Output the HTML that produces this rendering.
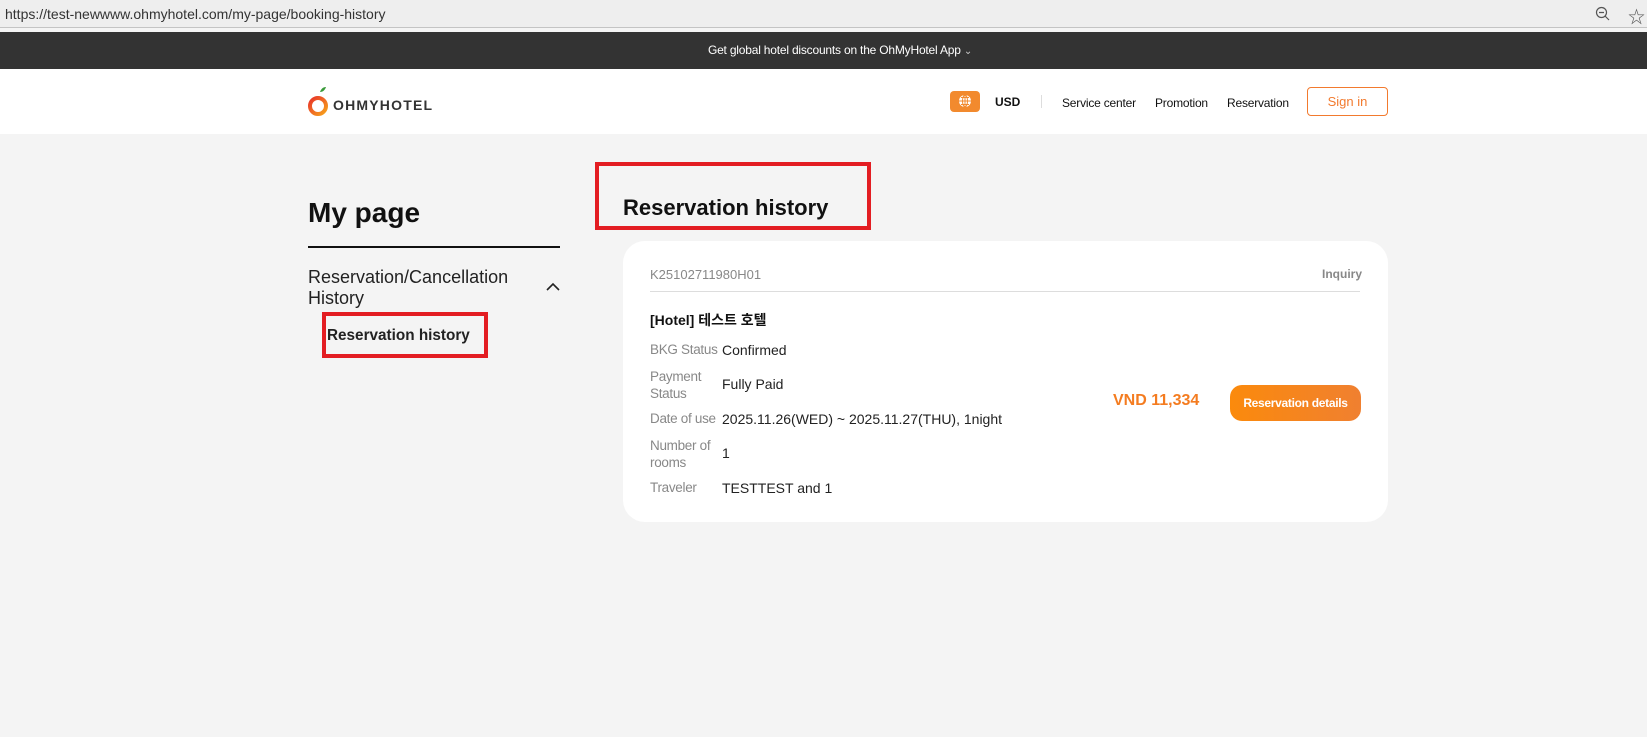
<!DOCTYPE html>
<html><head><meta charset="utf-8"><style>
*{margin:0;padding:0;box-sizing:border-box}
body{width:1647px;height:737px;overflow:hidden;background:#f4f4f4;font-family:"Liberation Sans","Noto Sans CJK KR",sans-serif;position:relative;color:#111}
.a{position:absolute;white-space:nowrap}
</style></head><body>
<div class="a" style="left:0;top:0;width:1647px;height:28px;background:#eeeeee;border-bottom:1px solid #c4c4c4"></div>
<div class="a" style="left:5px;top:6px;font-size:14px;color:#333">https://test-newwww.ohmyhotel.com/my-page/booking-history</div>
<svg class="a" style="left:1595px;top:6px" width="16" height="16" viewBox="0 0 16 16"><circle cx="6.5" cy="6.5" r="5" fill="none" stroke="#555" stroke-width="1.2"/><path d="M4 6.5h5M10 10l4 4" stroke="#555" stroke-width="1.2"/></svg>
<div class="a" style="left:1628px;top:3px;font-size:17px;color:#555">☆</div>
<div class="a" style="left:0;top:32px;width:1647px;height:37px;background:#333"></div>
<div class="a" style="left:0;top:43px;width:1680px;text-align:center;font-size:12px;color:#fff;letter-spacing:-0.2px">Get global hotel discounts on the OhMyHotel App <span style="font-size:10px;color:#ccc">&#8964;</span></div>
<div class="a" style="left:0;top:69px;width:1647px;height:65px;background:#fff"></div>
<svg class="a" style="left:306px;top:85px" width="24" height="34" viewBox="0 0 24 34"><defs><linearGradient id="g" x1="0" y1="0" x2="1" y2="1"><stop offset="0" stop-color="#e8342a"/><stop offset="1" stop-color="#f7a21b"/></linearGradient></defs><path d="M14 7c1-3 3-5 6-5-1 3-3 5-6 5z" fill="#3a9a3a"/><circle cx="12" cy="21" r="8" fill="none" stroke="url(#g)" stroke-width="4"/></svg>
<div class="a" style="left:333px;top:97px;font-size:14px;font-weight:bold;color:#333;letter-spacing:1.2px">OHMYHOTEL</div>
<div class="a" style="left:950px;top:91px;width:30px;height:21px;background:#f28a2e;border-radius:4px"></div>
<svg class="a" style="left:958px;top:94px" width="14" height="14" viewBox="0 0 14 14"><circle cx="7" cy="7" r="6" fill="#fff"/><path d="M1 7h12M7 1v12M3 3.5h8M3 10.5h8" stroke="#f28a2e" stroke-width="1"/><ellipse cx="7" cy="7" rx="2.5" ry="6" fill="none" stroke="#f28a2e" stroke-width="1"/></svg>
<div class="a" style="left:995px;top:95px;font-size:12px;font-weight:bold">USD</div>
<div class="a" style="left:1041px;top:95px;width:1px;height:13px;background:#ddd"></div>
<div class="a" style="left:1062px;top:96px;font-size:12px;letter-spacing:-0.2px">Service center</div>
<div class="a" style="left:1155px;top:96px;font-size:12px;letter-spacing:-0.2px">Promotion</div>
<div class="a" style="left:1227px;top:96px;font-size:12px;letter-spacing:-0.2px">Reservation</div>
<div class="a" style="left:1307px;top:87px;width:81px;height:29px;border:1px solid #f27a2e;border-radius:4px;text-align:center;line-height:27px;font-size:13px;color:#f27a2e">Sign in</div>
<div class="a" style="left:308px;top:197px;font-size:28px;font-weight:bold">My page</div>
<div class="a" style="left:308px;top:246px;width:252px;height:2px;background:#111"></div>
<div class="a" style="left:308px;top:267px;font-size:18px;line-height:21px;color:#222">Reservation/Cancellation<br>History</div>
<svg class="a" style="left:546px;top:282px" width="14" height="10" viewBox="0 0 14 10"><path d="M1 8l6-6 6 6" fill="none" stroke="#222" stroke-width="1.6"/></svg>
<div class="a" style="left:322px;top:312px;width:166px;height:46px;border:4px solid #e31d22"></div>
<div class="a" style="left:327px;top:327px;font-size:15.3px;font-weight:bold;color:#222">Reservation history</div>
<div class="a" style="left:595px;top:162px;width:276px;height:68px;border:4px solid #e31d22"></div>
<div class="a" style="left:623px;top:195px;font-size:22px;font-weight:bold">Reservation history</div>
<div class="a" style="left:623px;top:241px;width:765px;height:281px;background:#fff;border-radius:22px"></div>
<div class="a" style="left:650px;top:267px;font-size:13px;color:#888">K25102711980H01</div>
<div class="a" style="left:1322px;top:267px;font-size:12px;font-weight:bold;color:#888">Inquiry</div>
<div class="a" style="left:650px;top:291px;width:710px;height:1px;background:#ddd"></div>
<div class="a" style="left:650px;top:310px;font-size:14px;font-weight:bold">[Hotel] 테스트 호텔</div>
<div class="a" style="left:650px;top:342px;font-size:13.5px;color:#888;letter-spacing:-0.3px">BKG Status</div>
<div class="a" style="left:722px;top:342px;font-size:14px;color:#222">Confirmed</div>
<div class="a" style="left:650px;top:368px;font-size:13.5px;line-height:17px;color:#888;letter-spacing:-0.3px">Payment<br>Status</div>
<div class="a" style="left:722px;top:376px;font-size:14px;color:#222">Fully Paid</div>
<div class="a" style="left:650px;top:411px;font-size:13.5px;color:#888;letter-spacing:-0.3px">Date of use</div>
<div class="a" style="left:722px;top:411px;font-size:14px;color:#222">2025.11.26(WED) ~ 2025.11.27(THU), 1night</div>
<div class="a" style="left:650px;top:437px;font-size:13.5px;line-height:17px;color:#888;letter-spacing:-0.3px">Number of<br>rooms</div>
<div class="a" style="left:722px;top:445px;font-size:14px;color:#222">1</div>
<div class="a" style="left:650px;top:480px;font-size:13.5px;color:#888;letter-spacing:-0.3px">Traveler</div>
<div class="a" style="left:722px;top:480px;font-size:14px;color:#222">TESTTEST and 1</div>
<div class="a" style="left:1113px;top:392px;font-size:16px;font-weight:bold;color:#f47c20">VND 11,334</div>
<div class="a" style="left:1230px;top:385px;width:131px;height:36px;border-radius:12px;background:linear-gradient(90deg,#fb8a0c,#f08030);color:#fff;font-size:12px;font-weight:bold;text-align:center;line-height:36px;letter-spacing:-0.3px">Reservation details</div>
</body></html>
